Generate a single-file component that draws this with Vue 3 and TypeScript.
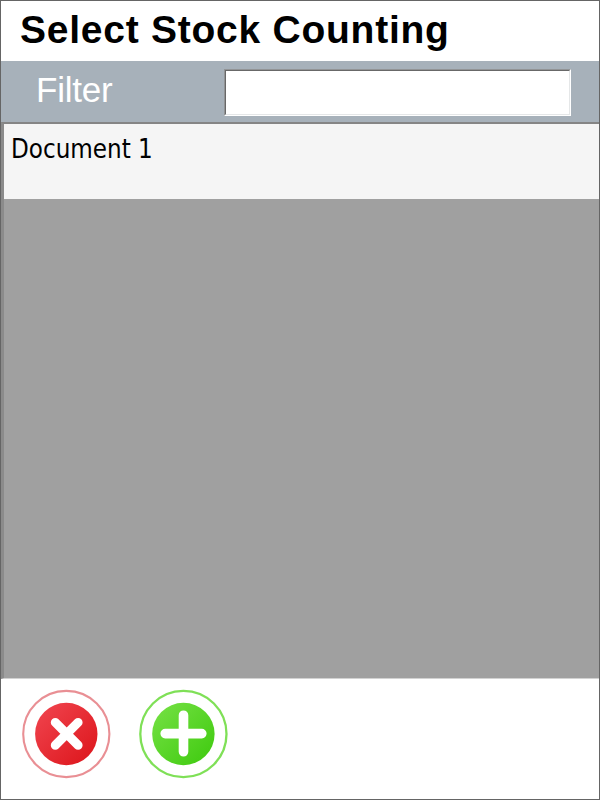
<script setup lang="ts">
import { ref } from 'vue'

interface StockDocument {
  id: number
  name: string
}

const filter = ref('')
const documents: StockDocument[] = [{ id: 1, name: 'Document 1' }]
</script>

<template>
  <main class="window">
    <header class="title"><h1>Select Stock Counting</h1></header>
    <section class="filter-bar">
      <label class="filter-label" for="filter">Filter</label>
      <div class="field"><input id="filter" v-model="filter" type="text" /></div>
    </section>
    <section class="list">
      <div v-for="doc in documents" :key="doc.id" class="row">
        <span class="row-text">{{ doc.name }}</span>
      </div>
    </section>
    <footer class="actions">
      <button type="button" class="action">
        <svg viewBox="0 0 90 90" width="90" height="90">
          <defs>
            <linearGradient id="red" x1="0.1" y1="0.1" x2="0.9" y2="0.9">
              <stop offset="0" stop-color="#ef414b" />
              <stop offset="1" stop-color="#de191f" />
            </linearGradient>
          </defs>
          <circle cx="45.3" cy="45" r="43.1" fill="#fff" stroke="#e98f94" stroke-width="2.1" />
          <circle cx="45.3" cy="45" r="31.2" fill="url(#red)" />
          <path d="M34.3 33.4 57.1 56.2M57.1 33.4 34.3 56.2" stroke="#fff" stroke-width="9" stroke-linecap="round" />
        </svg>
      </button>
      <button type="button" class="action">
        <svg viewBox="0 0 90 90" width="90" height="90">
          <defs>
            <linearGradient id="green" x1="0.1" y1="0.1" x2="0.9" y2="0.9">
              <stop offset="0" stop-color="#71df40" />
              <stop offset="1" stop-color="#43cc13" />
            </linearGradient>
          </defs>
          <circle cx="45.4" cy="45" r="43.1" fill="#fff" stroke="#7fe057" stroke-width="2.3" />
          <circle cx="45.4" cy="45" r="31.2" fill="url(#green)" />
          <path d="M45.5 26.2V62.8M27.2 44.6H63.8" stroke="#fff" stroke-width="9.6" stroke-linecap="round" />
        </svg>
      </button>
    </footer>
  </main>
</template>

<style>
body {
  margin: 0;
  background: #fff;
}
</style>

<style scoped>
.window {
  box-sizing: border-box;
  width: 600px;
  height: 800px;
  display: flex;
  flex-direction: column;
  overflow: hidden;
  border: 1px solid #656565;
  background: #fff;
  font-family: "Liberation Sans", Arial, sans-serif;
}
.title {
  height: 60px;
  flex: none;
  padding-left: 19px;
}
h1 {
  margin: 0;
  font-size: 39px;
  line-height: 58px;
  font-weight: 700;
  letter-spacing: 0.75px;
  white-space: nowrap;
  color: #000;
}
.filter-bar {
  height: 61px;
  flex: none;
  box-sizing: border-box;
  display: flex;
  align-items: flex-start;
  padding: 8px 28px 0 35px;
  background: #a7b1ba;
}
.filter-label {
  flex: 1;
  color: #fff;
  font-size: 35px;
  line-height: 42px;
  letter-spacing: -0.2px;
}
.field {
  box-sizing: border-box;
  width: 347px;
  height: 47px;
  border: 1px solid;
  border-color: #929496 #fff #fff #929496;
}
input {
  display: block;
  box-sizing: border-box;
  width: 100%;
  height: 100%;
  margin: 0;
  padding: 0 6px;
  border: 1px solid;
  border-color: #686868 #e5e7e8 #e5e7e8 #686868;
  border-radius: 0;
  outline: none;
  background: #fff;
  font: 30px "Liberation Sans", Arial, sans-serif;
}
.list {
  height: 557px;
  flex: none;
  box-sizing: border-box;
  border-top: 2px solid #858585;
  border-left: 3px solid #8b8b8b;
  border-bottom: 1px solid #d2d2d2;
  background: #a0a0a0;
}
.row {
  height: 75px;
  box-sizing: border-box;
  padding: 9px 0 0 7px;
  background: #f5f5f5;
}
.row-text {
  display: block;
  font-family: "DejaVu Sans Condensed", "DejaVu Sans", Tahoma, sans-serif;
  font-stretch: condensed;
  font-size: 25.7px;
  line-height: 32px;
  color: #000;
}
.actions {
  flex: 1;
  display: flex;
  align-items: flex-start;
  gap: 27px;
  padding: 10px 0 0 20px;
}
.action {
  display: block;
  padding: 0;
  border: 0;
  background: none;
}
.action svg {
  display: block;
  fill: none;
}
</style>
